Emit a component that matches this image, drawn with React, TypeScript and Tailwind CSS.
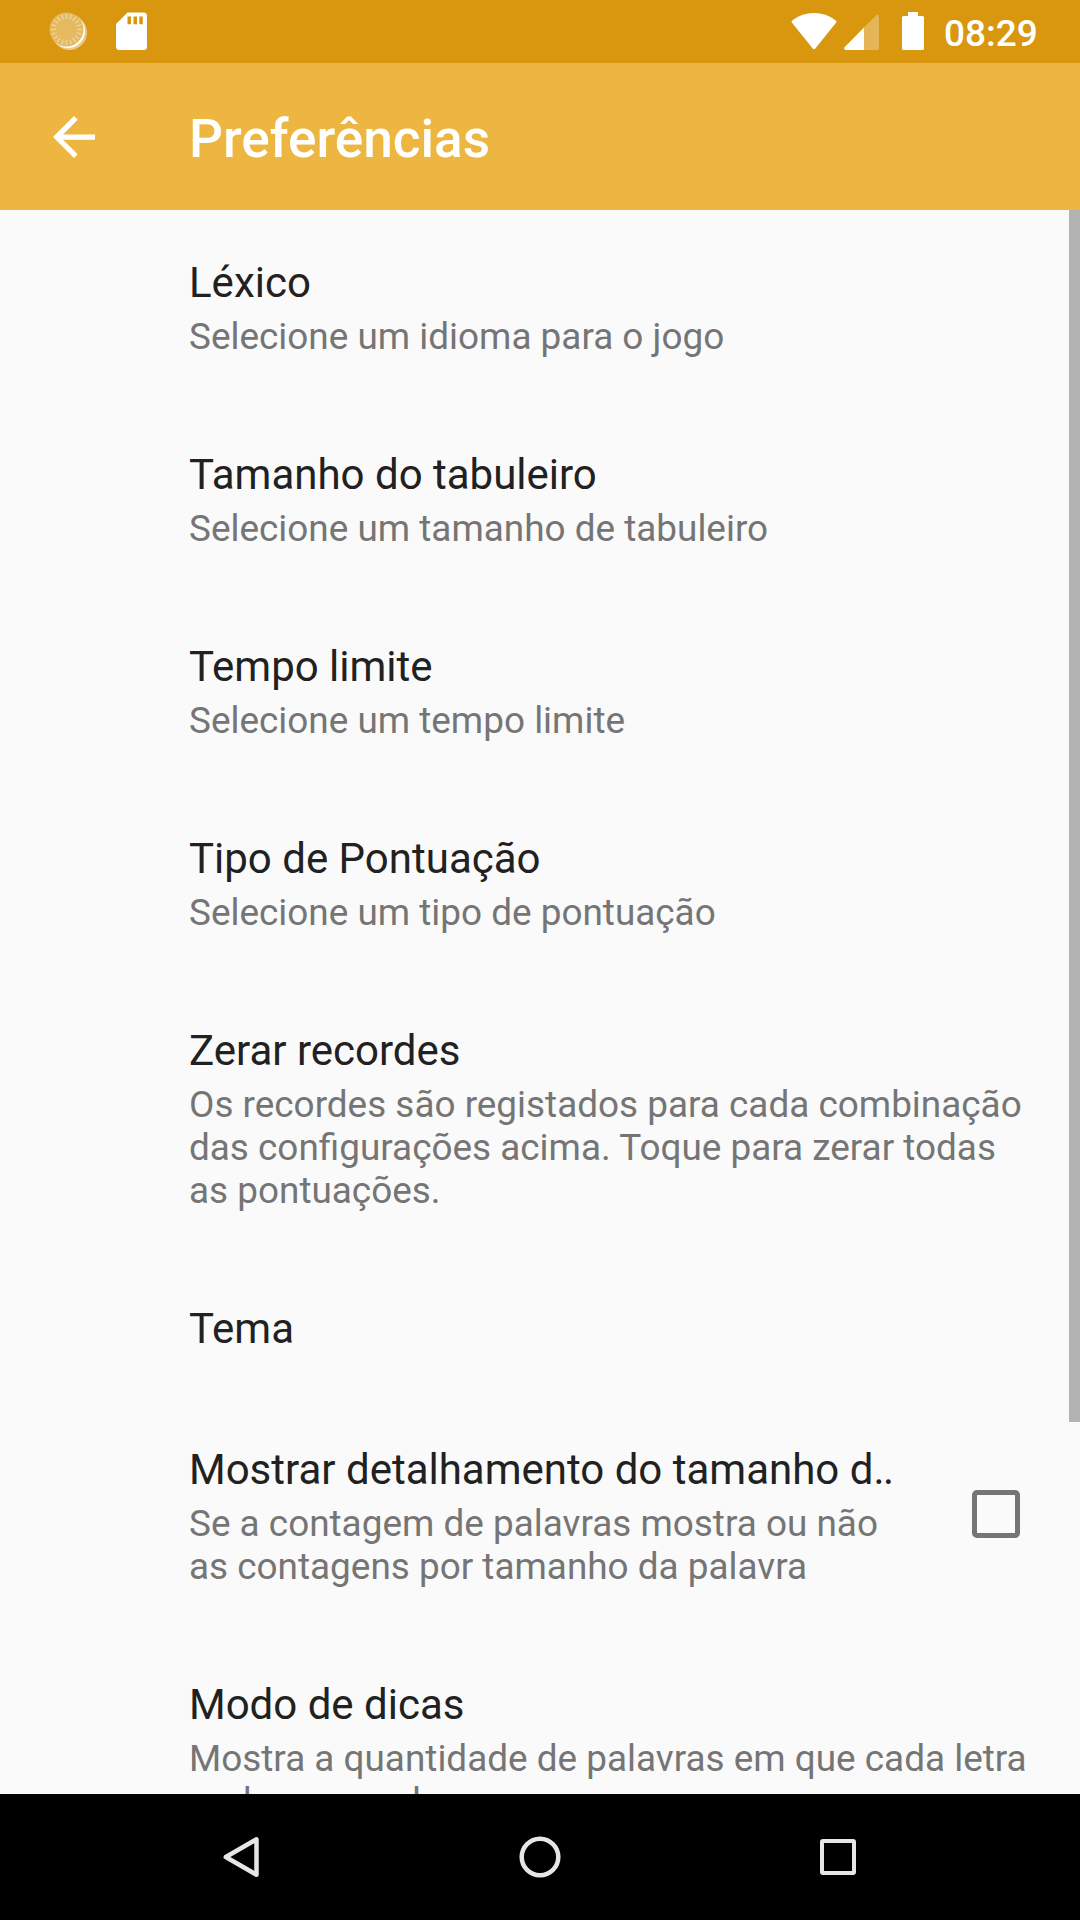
import React from "react";

type Item = { title: string; clipped?: boolean; lines?: string[]; height: string; checkbox?: boolean };

const items: Item[] = [
  { title: "Léxico", lines: ["Selecione um idioma para o jogo"], height: "h-[192px]" },
  { title: "Tamanho do tabuleiro", lines: ["Selecione um tamanho de tabuleiro"], height: "h-[192px]" },
  { title: "Tempo limite", lines: ["Selecione um tempo limite"], height: "h-[192px]" },
  { title: "Tipo de Pontuação", lines: ["Selecione um tipo de pontuação"], height: "h-[192px]" },
  {
    title: "Zerar recordes",
    lines: ["Os recordes são registados para cada combinação", "das configurações acima. Toque para zerar todas", "as pontuações."],
    height: "h-[278px]",
  },
  { title: "Tema", height: "h-[141px]" },
  {
    title: "Mostrar detalhamento do tamanho d",
    clipped: true,
    lines: ["Se a contagem de palavras mostra ou não", "as contagens por tamanho da palavra"],
    height: "h-[235px]",
    checkbox: true,
  },
  {
    title: "Modo de dicas",
    lines: ["Mostra a quantidade de palavras em que cada letra", "pode ser usada"],
    height: "h-[235px]",
  },
];

const ticks = Array.from({ length: 20 }, (_, i) => i * 18);

function StatusBar() {
  return (
    <div className="flex h-[63px] shrink-0 items-start bg-[#d8970f] text-white">
      <svg className="mt-[12px] ml-[49px] h-[39px] w-[39px]" viewBox="0 0 39 39" fill="none">
        <circle cx="20.500" cy="20.500" r="17.500" fill="#ebcb8b" />
        <circle cx="19" cy="19" r="17" fill="#fff" />
        <circle cx="17.500" cy="17.500" r="17" fill="#e4b95f" />
        {ticks.map((a) => (
          <path key={a} d="M17.500 1.800v5.200" stroke="#efd59e" strokeWidth="1.300" transform={`rotate(${a} 17.500 17.500)`} />
        ))}
      </svg>
      <svg className="mt-[12px] ml-[28px] h-[38px] w-[31px]" viewBox="0 0 31 38" fill="currentColor">
        <path fillRule="evenodd" d="M11.500 0.500h16a3.500 3.500 0 0 1 3.500 3.500v30.500a3.500 3.500 0 0 1-3.500 3.500H3.500a3.500 3.500 0 0 1-3.500-3.500V12zM11.500 4.500v7.700h3.500V4.500zm6 0v7.700h3.500V4.500zm5.800 0v7.700h3.500V4.500z" />
      </svg>
      <svg className="mt-[13px] ml-auto h-[36px] w-[46px]" viewBox="0 0 46 36" fill="currentColor">
        <path d="M21.500 35.300L1 9.700Q0 8.300 1.500 7.200Q11 0 23 0T44.500 7.200Q46 8.300 45 9.700L24.500 35.300Q23 37 21.500 35.300z" />
      </svg>
      <svg className="mt-[14px] ml-[7px] h-[36px] w-[35px]" viewBox="0 0 35 36" fill="currentColor">
        <path d="M20 13.500L32.300 1.200Q35 0 35 2.500V34q0 2-2 2H20z" opacity=".3" />
        <path d="M20 13.500V36H1.500Q-1 35 .8 33z" />
      </svg>
      <svg className="mt-[12px] ml-[23px] h-[38px] w-[22px]" viewBox="0 0 22 38" fill="currentColor">
        <path d="M6 0h10v4h4.500a1.500 1.500 0 0 1 1.500 1.500v31a1.500 1.500 0 0 1-1.500 1.500h-19a1.500 1.500 0 0 1-1.500-1.500v-31a1.500 1.500 0 0 1 1.500-1.500h4.500z" />
      </svg>
      <span className="mt-[15px] mr-[41px] ml-[20px] w-[95px] text-[37px] leading-[38px] font-medium">08:29</span>
    </div>
  );
}

export default function App() {
  return (
    <div className="flex h-[1920px] w-[1080px] flex-col overflow-hidden bg-[#fafafa] font-['Roboto',sans-serif]">
      <StatusBar />
      <header className="flex h-[147px] shrink-0 items-center bg-[#edb641] text-white">
        <svg className="ml-[53px] h-[42px] w-[42px]" viewBox="4 4 16 16" fill="currentColor">
          <path d="M20 11H7.830l5.590-5.590L12 4l-8 8 8 8 1.410-1.410L7.830 13H20z" />
        </svg>
        <h1 className="mt-[5px] ml-[94px] text-[53.200px] leading-[62px] font-medium">Preferências</h1>
      </header>
      <main className="relative min-h-0 flex-1 overflow-hidden">
        {items.map((item) => (
          <section key={item.title} className={`flex pl-[189px] ${item.height}`}>
            <div className="pt-[48px] whitespace-nowrap">
              <h2 className="text-[42px] leading-[50px] text-[#212121]">
                {item.title}
                {item.clipped && <span className="tracking-[-1.500px]">..</span>}
              </h2>
              <div className="mt-[7px] text-[36.900px] leading-[43px] text-[#757575]">
                {item.lines?.map((line) => <p key={line}>{line}</p>)}
              </div>
            </div>
            {item.checkbox && (
              <span className="mt-[93px] mr-[60px] ml-auto h-[48px] w-[48px] rounded-[5px] border-[5px] border-[#757575]" />
            )}
          </section>
        ))}
        <div className="absolute top-0 right-0 h-[1212px] w-[11px] bg-[#b3b3b3]" />
      </main>
      <nav className="flex h-[126px] shrink-0 items-center bg-black">
        <svg className="ml-[222px] h-[42px] w-[38px]" viewBox="0 0 38 42" fill="none" stroke="#e6e6e6" strokeWidth="4.500" strokeLinejoin="round">
          <path d="M34.500 3.300v35.400L3.800 21z" />
        </svg>
        <svg className="ml-[259px] h-[42px] w-[42px]" viewBox="0 0 42 42" fill="none" stroke="#e6e6e6" strokeWidth="4.500">
          <circle cx="21" cy="21" r="18.300" />
        </svg>
        <span className="ml-[259px] h-[36px] w-[36px] rounded-[3px] border-4 border-[#e6e6e6]" />
      </nav>
    </div>
  );
}
